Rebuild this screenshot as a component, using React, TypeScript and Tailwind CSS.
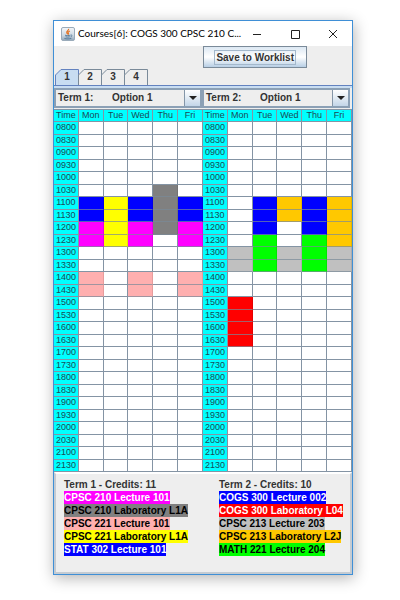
import React, { useState } from "react";

type Fill = string;
type Section = { name: string; className: string };
type Term = {
  id: number;
  credits: number;
  cells: Record<string, Fill[]>;
  sections: Section[];
};

const DAYS = ["Mon", "Tue", "Wed", "Thu", "Fri"];

const TIMES = Array.from({ length: 28 }, (_, i) => {
  const hour = String(8 + Math.floor(i / 2)).padStart(2, "0");
  return hour + (i % 2 ? "30" : "00");
});

const W = "bg-white";
const BLUE = "bg-[#0000ff]";
const YELLOW = "bg-[#ffff00]";
const MAGENTA = "bg-[#ff00ff]";
const GRAY = "bg-[#808080]";
const PINK = "bg-[#ffafaf]";
const ORANGE = "bg-[#ffc800]";
const GREEN = "bg-[#00ff00]";
const SILVER = "bg-[#c0c0c0]";
const RED = "bg-[#ff0000]";

const TERMS: Term[] = [
  {
    id: 1,
    credits: 11,
    cells: {
      "1030": [W, W, W, GRAY, W],
      "1100": [BLUE, YELLOW, BLUE, GRAY, BLUE],
      "1130": [BLUE, YELLOW, BLUE, GRAY, BLUE],
      "1200": [MAGENTA, YELLOW, MAGENTA, GRAY, MAGENTA],
      "1230": [MAGENTA, YELLOW, MAGENTA, W, MAGENTA],
      "1400": [PINK, W, PINK, W, PINK],
      "1430": [PINK, W, PINK, W, PINK],
    },
    sections: [
      { name: "CPSC 210 Lecture 101", className: "bg-[#ff00ff] text-white" },
      { name: "CPSC 210 Laboratory L1A", className: "bg-[#808080] text-black" },
      { name: "CPSC 221 Lecture 101", className: "bg-[#ffafaf] text-black" },
      { name: "CPSC 221 Laboratory L1A", className: "bg-[#ffff00] text-black" },
      { name: "STAT 302 Lecture 101", className: "bg-[#0000ff] text-white" },
    ],
  },
  {
    id: 2,
    credits: 10,
    cells: {
      "1100": [W, BLUE, ORANGE, BLUE, ORANGE],
      "1130": [W, BLUE, ORANGE, BLUE, ORANGE],
      "1200": [W, BLUE, W, BLUE, ORANGE],
      "1230": [W, GREEN, W, GREEN, ORANGE],
      "1300": [SILVER, GREEN, SILVER, GREEN, SILVER],
      "1330": [SILVER, GREEN, SILVER, GREEN, SILVER],
      "1500": [RED, W, W, W, W],
      "1530": [RED, W, W, W, W],
      "1600": [RED, W, W, W, W],
      "1630": [RED, W, W, W, W],
    },
    sections: [
      { name: "COGS 300 Lecture 002", className: "bg-[#0000ff] text-white" },
      { name: "COGS 300 Laboratory L04", className: "bg-[#ff0000] text-white" },
      { name: "CPSC 213 Lecture 203", className: "bg-[#c0c0c0] text-black" },
      { name: "CPSC 213 Laboratory L2J", className: "bg-[#ffc800] text-black" },
      { name: "MATH 221 Lecture 204", className: "bg-[#00ff00] text-black" },
    ],
  },
];

function JavaIcon() {
  return (
    <svg viewBox="0 0 14 14" className="size-[14px] shrink-0" aria-hidden="true">
      <defs>
        <linearGradient id="java-face" x1="0" y1="0" x2="0" y2="1">
          <stop offset="0" stopColor="#f4f7fa" />
          <stop offset="0.6" stopColor="#ccd8e2" />
          <stop offset="1" stopColor="#8fa5b8" />
        </linearGradient>
      </defs>
      <rect x="0.5" y="0.5" width="13" height="13" rx="1.5" fill="url(#java-face)" stroke="#9aabba" />
      <path d="M7.6 1.8C8.2 3.4 4.8 4.2 5.8 6c.3.6.8.9.9 1.4M8.9 4C7.2 4.8 6.6 5.6 7.4 6.4c.3.4.1.8-.2 1" fill="none" stroke="#e2762a" strokeWidth="1.2" />
      <path d="M4 8.2c1 .5 4.3.5 5.4 0M4.6 9.8c1 .4 3.2.4 4.2 0M3.4 11.4c1.8.7 5.4.6 7-.1M9.8 8c1.6-.2 1.5 1.5-.2 1.9" fill="none" stroke="#4f7596" strokeWidth="0.9" />
    </svg>
  );
}

function TitleBar() {
  return (
    <header className="flex h-[25px] items-center bg-white pl-[7px] pr-[14px]">
      <JavaIcon />
      <h1 className="ml-[3px] flex-1 font-[Lato,'Noto_Sans',sans-serif] text-[10px] whitespace-nowrap text-black">
        Courses[6]: COGS 300 CPSC 210 C...
      </h1>
      <div className="flex gap-7">
        <button type="button" aria-label="Minimize">
          <svg viewBox="0 0 10 10" className="size-[10px]" stroke="#222" fill="none">
            <path d="M1 5.5h8" />
          </svg>
        </button>
        <button type="button" aria-label="Maximize">
          <svg viewBox="0 0 10 10" className="size-[10px]" stroke="#222" fill="none">
            <path d="M1.5 1.5h8v8h-8z" />
          </svg>
        </button>
        <button type="button" aria-label="Close">
          <svg viewBox="0 0 10 10" className="size-[10px]" stroke="#222" fill="none">
            <path d="M1 1l8 8M9 1l-8 8" />
          </svg>
        </button>
      </div>
    </header>
  );
}

function Tab({ label, active, onSelect }: { label: string; active: boolean; onSelect: () => void }) {
  return (
    <button
      type="button"
      role="tab"
      aria-selected={active}
      onClick={onSelect}
      className="relative -ml-px h-4 w-6 text-[10px] leading-4 font-bold text-[#333]"
    >
      <svg viewBox="0 0 24 16" preserveAspectRatio="none" className="absolute inset-0 h-full w-full" aria-hidden="true">
        <path d="M0.5 16V6L6 0.5H23.5V16" fill={active ? "#c8ddf2" : "#eeeeee"} stroke={active ? "#6382bf" : "#7a8a99"} />
      </svg>
      <span className="relative">{label}</span>
    </button>
  );
}

function OptionPicker({ term }: { term: Term }) {
  const id = `term-${term.id}-option`;
  return (
    <div className="flex h-5 items-stretch border-2 border-[#8ba0b5] text-[10px] font-bold text-[#333]">
      <label htmlFor={id} className="w-14 pl-[2px] leading-4">
        Term {term.id}:
      </label>
      <div className="relative flex min-w-0 flex-1">
        <select id={id} className="w-full appearance-none bg-transparent leading-4 outline-none">
          <option>Option 1</option>
        </select>
        <span className="pointer-events-none absolute inset-y-0 right-0 flex w-4 items-center justify-center border-l border-[#8496a8] bg-linear-to-b from-white to-[#c3d6e8]">
          <svg viewBox="0 0 8 4" className="h-1 w-2" aria-hidden="true">
            <path d="M0 0h8L4 4z" fill="#222" />
          </svg>
        </span>
      </div>
    </div>
  );
}

const LINE = "border-r border-b p-0";
const PLAIN = "border-[#8494a4]";
const FILLED = "border-r-black/10 border-b-[#7a8a99]/70";

function Timetable({ term }: { term: Term }) {
  return (
    <table className="h-[362px] w-full table-fixed border-separate border-spacing-0 text-center text-[9px] leading-[11px] text-[#1c4a55]">
      <thead>
        <tr className="bg-[#00ffff]">
          {["Time", ...DAYS].map((d) => (
            <th key={d} scope="col" className={`${LINE} ${PLAIN} font-normal`}>
              {d}
            </th>
          ))}
        </tr>
      </thead>
      <tbody>
        {TIMES.map((t) => (
          <tr key={t}>
            <th scope="row" className={`${LINE} ${PLAIN} bg-[#00ffff] font-normal`}>
              {t}
            </th>
            {DAYS.map((d, i) => {
              const fill = term.cells[t]?.[i] ?? W;
              return <td key={d} className={`${LINE} ${fill === W ? PLAIN : FILLED} ${fill}`} />;
            })}
          </tr>
        ))}
      </tbody>
    </table>
  );
}

function Legend({ term }: { term: Term }) {
  return (
    <section className="text-[10px] leading-[13px] font-bold whitespace-nowrap">
      <h2 className="text-[#333]">
        Term {term.id} - Credits: {term.credits}
      </h2>
      <ul>
        {term.sections.map((s) => (
          <li key={s.name} className={`w-fit ${s.className}`}>
            {s.name}
          </li>
        ))}
      </ul>
    </section>
  );
}

export default function App() {
  const [tab, setTab] = useState("1");
  return (
    <div className="min-h-screen bg-white pt-5 pr-[47px] pb-6 pl-[53px] font-['Liberation_Sans',Arial,sans-serif]">
      <main className="border border-[#3f8fd6] bg-[#eeeeee] shadow-[1px_3px_14px_rgba(0,0,0,0.3)]">
        <TitleBar />
        <div className="flex justify-end pr-[45px]">
          <button
            type="button"
            className="h-[22px] border border-[#7a8a99] bg-linear-to-b from-[#dce8f3] via-white to-[#b8cfe5] px-[10px] text-[10px] font-bold text-[#333]"
          >
            <span className="block border border-[#a3b8cc] px-px leading-[13px]">Save to Worklist</span>
          </button>
        </div>
        <div role="tablist" className="flex pt-px pl-[2px]">
          {["1", "2", "3", "4"].map((n) => (
            <Tab key={n} label={n} active={tab === n} onSelect={() => setTab(n)} />
          ))}
        </div>
        <div className="border-t border-[#6382bf] bg-[#c8ddf2] pt-[2px]">
          <div className="grid grid-cols-2 bg-[#eeeeee] pr-[2px] pb-px">
            {TERMS.map((t) => (
              <OptionPicker key={t.id} term={t} />
            ))}
          </div>
          <div className="grid grid-cols-2 border-t border-[#8494a4]">
            {TERMS.map((t) => (
              <Timetable key={t.id} term={t} />
            ))}
          </div>
        </div>
        <footer className="grid grid-cols-2 gap-x-6 border-2 border-[#c4cbd2] border-t-white pt-1 pb-4 pl-2">
          {TERMS.map((t) => (
            <Legend key={t.id} term={t} />
          ))}
        </footer>
      </main>
    </div>
  );
}
